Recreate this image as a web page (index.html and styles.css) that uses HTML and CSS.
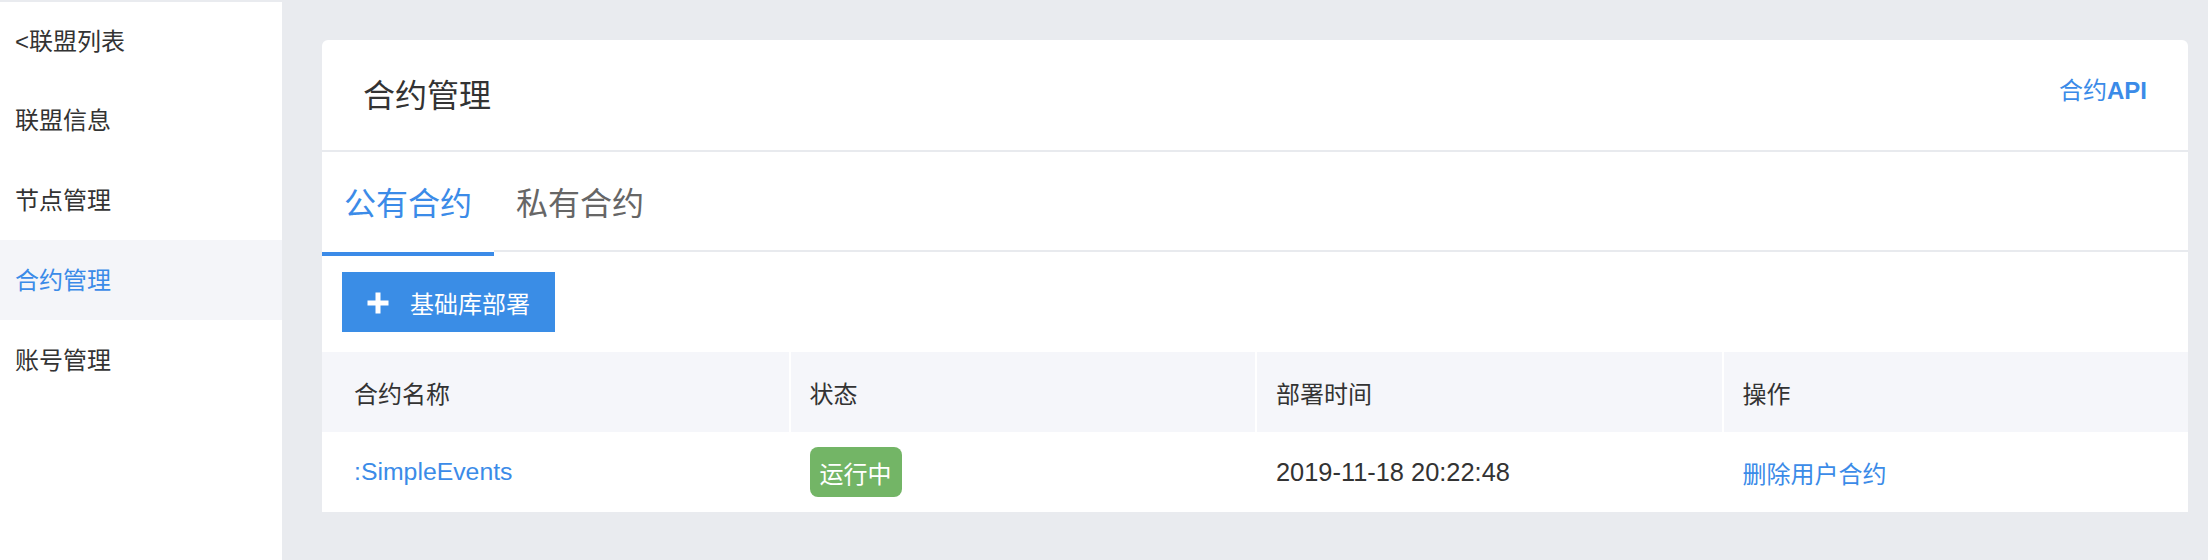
FILE: index.html
```html
<!DOCTYPE html>
<html lang="zh-CN">
<head>
<meta charset="utf-8">
<title>合约管理</title>
<link rel="stylesheet" href="styles.css">
</head>
<body>
<div class="layout">
  <aside class="sidebar">
    <div class="nav-item nav-back">&lt;联盟列表</div>
    <div class="nav-item">联盟信息</div>
    <div class="nav-item">节点管理</div>
    <div class="nav-item active">合约管理</div>
    <div class="nav-item">账号管理</div>
  </aside>
  <main class="main">
    <section class="card">
      <header class="card-header">
        <h1 class="card-title">合约管理</h1>
        <a class="api-link">合约<b>API</b></a>
      </header>
      <nav class="tabs">
        <div class="tab active">公有合约</div>
        <div class="tab">私有合约</div>
      </nav>
      <div class="toolbar">
        <button class="btn-primary">
          <svg class="btn-icon" width="24" height="24" viewBox="0 0 24 24"><path d="M12 1.5v21M1.5 12h21" stroke="#fff" stroke-width="5" fill="none"/></svg>
          <span>基础库部署</span>
        </button>
      </div>
      <div class="table">
        <div class="row head">
          <div class="cell">合约名称</div>
          <div class="cell">状态</div>
          <div class="cell">部署时间</div>
          <div class="cell">操作</div>
        </div>
        <div class="row">
          <div class="cell"><a class="link name">:SimpleEvents</a></div>
          <div class="cell"><span class="badge">运行中</span></div>
          <div class="cell date">2019-11-18 20:22:48</div>
          <div class="cell"><a class="link">删除用户合约</a></div>
        </div>
      </div>
    </section>
  </main>
</div>
</body>
</html>
```

FILE: styles.css
```css
* { box-sizing: border-box; }
html, body {
  margin: 0;
  padding: 0;
}
body {
  background: #e9ebef;
  font-family: "Liberation Sans", "Noto Sans CJK SC", sans-serif;
  color: #333;
}
.layout {
  display: flex;
  height: 560px;
}
.sidebar {
  width: 282px;
  flex: none;
  margin-top: 2px;
  background: #fff;
}
.nav-item {
  height: 80px;
  display: flex;
  align-items: center;
  padding: 0 0 4px 15px;
  font-size: 24px;
  color: #333;
}
.nav-back { height: 78px; }
.nav-item.active {
  background: #f4f5f9;
  color: #3b8be8;
}
.main {
  flex: 1;
  padding: 40px 20px 0 40px;
}
.card {
  background: #fff;
  border-radius: 6px 6px 0 0;
}
.card-header {
  height: 112px;
  border-bottom: 2px solid #e8eaee;
  display: flex;
  align-items: center;
  justify-content: space-between;
  padding: 0 41px;
}
.card-title {
  margin: 0 0 4px;
  font-size: 32px;
  font-weight: normal;
  color: #333;
}
.api-link {
  font-size: 24px;
  color: #3b8be8;
  margin-bottom: 14px;
}
.api-link b { font-weight: bold; }
.tabs {
  display: flex;
  height: 104px;
  background: linear-gradient(#e8eaee, #e8eaee) no-repeat 0 98px / 100% 2px;
}
.tab {
  display: flex;
  align-items: center;
  padding: 0 22px 3px;
  font-size: 32px;
  color: #666;
  border-bottom: 4px solid transparent;
}
.tab.active {
  color: #3b8be8;
  background: #fff;
  border-bottom-color: #3b8be8;
}
.toolbar {
  padding: 16px 20px 20px;
}
.btn-primary {
  display: inline-flex;
  align-items: center;
  gap: 20px;
  height: 60px;
  padding: 0 25px 0 24px;
  border: none;
  background: #3a8de6;
  color: #fff;
  font-family: inherit;
  font-size: 24px;
}
.btn-icon { flex: none; margin-top: 2px; }
.table { width: 100%; }
.row {
  display: grid;
  grid-template-columns: repeat(4, 1fr);
  height: 80px;
}
.row.head { background: #f5f6fa; }
.cell {
  display: flex;
  align-items: center;
  padding-left: 19px;
  border-left: 2px solid #fff;
  font-size: 24px;
  color: #333;
}
.cell:first-child {
  border-left: none;
  padding-left: 32px;
}
.link { color: #3b8be8; }
.name { font-size: 24.8px; }
.date { font-size: 25.4px; }
.badge {
  display: inline-flex;
  align-items: center;
  height: 50px;
  padding: 0 10px;
  border-radius: 8px;
  background: #73b566;
  color: #fff;
  font-size: 24px;
}
```
